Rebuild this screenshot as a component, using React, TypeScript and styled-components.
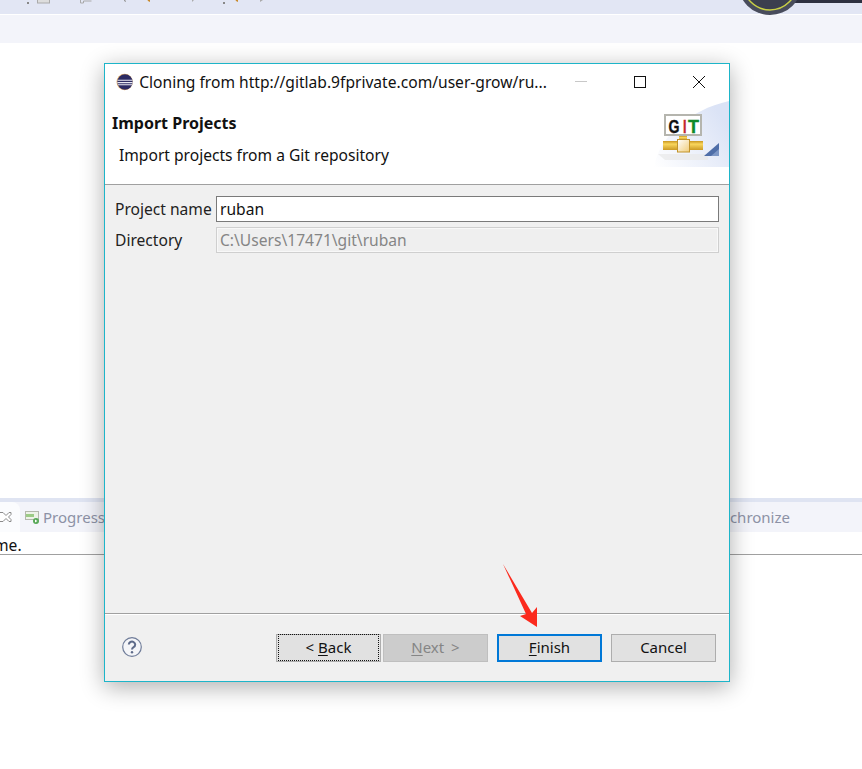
import styled, { createGlobalStyle } from "styled-components";

const GlobalStyle = createGlobalStyle`
  html, body {
    margin: 0;
    padding: 0;
    background: #fff;
  }
  body {
    font-family: "Noto Sans", "Open Sans", "Liberation Sans", sans-serif;
    font-size: 15.6px;
    color: #111;
  }
`;

const Page = styled.div`
  position: relative;
  width: 862px;
  height: 769px;
  overflow: hidden;
  display: flex;
  flex-direction: column;
`;

const TopToolbar = styled.div`
  position: relative;
  height: 14px;
  background: #e2e6f4;
  border-bottom: 1px solid #fff;
`;

const TopStrip = styled.div`
  height: 28px;
  background: #f3f4fa;
`;

const Editor = styled.div`
  height: 455px;
`;

const ViewStack = styled.div`
  border-top: 4px solid #dfe4f2;
`;

const TabBar = styled.div`
  height: 30px;
  background: #f3f4fa;
  display: flex;
  justify-content: space-between;
  align-items: center;
  padding-right: 72px;
  color: #8d92a6;
  font-size: 15px;
`;

const TabGroup = styled.div`
  height: 100%;
  display: flex;
  align-items: center;
`;

const ActiveTab = styled.div`
  width: 20px;
  height: 100%;
  background: #fbfcfe;
  border-top-right-radius: 8px;
  display: flex;
  align-items: center;
`;

const Tab = styled.div`
  display: flex;
  align-items: center;
  gap: 4px;
  margin-left: 5px;
`;

const Console = styled.div`
  height: 22px;
  line-height: 26px;
  border-bottom: 1px solid #a0a0a0;
  color: #111;
  margin-left: -6px;
`;

const Dialog = styled.div`
  position: absolute;
  left: 104px;
  top: 63px;
  width: 626px;
  height: 619px;
  box-sizing: border-box;
  border: 1px solid #1db5c9;
  background: #f0f0f0;
  box-shadow: 0 5px 22px rgba(0, 0, 0, 0.32);
  display: flex;
  flex-direction: column;
`;

const TitleBar = styled.div`
  height: 37px;
  flex: none;
  background: #fff;
  display: flex;
  align-items: center;
  padding: 0 1px 1px 11px;
  box-sizing: border-box;
`;

const Title = styled.div`
  margin-left: 6px;
  width: 430px;
  white-space: nowrap;
`;

const WindowButtons = styled.div`
  margin-left: auto;
  display: flex;
  align-items: center;
`;

const WindowButton = styled.div`
  width: 59px;
  height: 36px;
  display: flex;
  align-items: center;
  justify-content: center;
`;

const Header = styled.div`
  position: relative;
  height: 84px;
  flex: none;
  box-sizing: border-box;
  background: #fff;
  border-bottom: 1px solid #a0a0a0;
  padding: 9px 0 0 7px;
`;

const HeaderTitle = styled.div`
  font-weight: 700;
  font-size: 16px;
  line-height: 26px;
`;

const HeaderMessage = styled.div`
  margin: 6px 0 0 7px;
  line-height: 26px;
`;

const Banner = styled.svg`
  position: absolute;
  right: 0;
  top: 0;
`;

const Form = styled.div`
  flex: 1;
  padding: 11px 10px 0;
  display: grid;
  grid-template-columns: 101px 1fr;
  grid-auto-rows: 26px;
  row-gap: 5px;
  align-items: center;
`;

const FieldLabel = styled.label`
  color: #222;
`;

const TextInput = styled.div<{ $disabled?: boolean }>`
  height: 26px;
  box-sizing: border-box;
  padding-left: 3px;
  line-height: 24px;
  border: 1px solid ${(p) => (p.$disabled ? "#cfcfcf" : "#7a7a7a")};
  background: ${(p) => (p.$disabled ? "#efefef" : "#fff")};
  color: ${(p) => (p.$disabled ? "#858585" : "#111")};
  box-shadow: ${(p) => (p.$disabled ? "inset 0 0 0 1px #f8f8f8" : "none")};
`;

const Footer = styled.div`
  height: 68px;
  flex: none;
  box-sizing: border-box;
  border-top: 1px solid #a0a0a0;
  box-shadow: inset 0 1px 0 #fff;
  padding: 20px 13px 0 17px;
  display: flex;
  align-items: flex-start;
`;

const HelpButton = styled.div`
  margin-top: 3px;
  line-height: 0;
`;

const Buttons = styled.div`
  margin-left: auto;
  display: flex;
  font-size: 15px;
`;

const Button = styled.div<{ $kind?: "focus" | "disabled" | "default" }>`
  width: 105px;
  height: 28px;
  box-sizing: border-box;
  margin-left: ${(p) => (p.$kind === "default" ? "7px" : "0")};
  margin-right: ${(p) => (p.$kind === "default" ? "9px" : "2px")};
  display: flex;
  align-items: center;
  justify-content: center;
  line-height: 1;
  padding-bottom: 1px;
  word-spacing: ${(p) => (p.$kind === "disabled" ? "3px" : "0")};
  background: ${(p) => (p.$kind === "disabled" ? "#cccccc" : "#e1e1e1")};
  color: ${(p) => (p.$kind === "disabled" ? "#858585" : "#111")};
  border: ${(p) =>
    p.$kind === "default"
      ? "2px solid #0078d7"
      : p.$kind === "disabled"
        ? "1px solid #bfbfbf"
        : "1px solid #adadad"};
  &:last-child {
    margin-right: 0;
  }
`;

const FocusRing = styled.div`
  width: 100%;
  height: 100%;
  margin: 1px;
  border: 1px dotted #111;
  display: flex;
  align-items: center;
  justify-content: center;
`;

const Arrow = styled.svg`
  position: absolute;
  left: 500px;
  top: 562px;
`;

const Overlay = styled.svg`
  position: absolute;
  left: 0;
  top: 0;
`;

const Mnemonic = styled.span`
  text-decoration: underline;
  text-underline-offset: 2px;
`;

const EclipseIcon = () => (
  <svg width="18" height="18" viewBox="0 0 18 18">
    <circle cx="9" cy="9" r="8.5" fill="#e8b26a" />
    <circle cx="9.4" cy="9" r="8" fill="#2c2b63" />
    <path d="M1.6 6.6h15.6v1.1H1.6zM1.4 9h16v1.2H1.4zM2 11.4h14.8v1H2z" fill="#e9e9f2" />
  </svg>
);

const GitBanner = () => (
  <Banner width="76" height="68" viewBox="0 0 76 68">
    <defs>
      <linearGradient id="glow" x1="0" y1="1" x2="1" y2="0.4">
        <stop offset="0" stopColor="#ffffff" />
        <stop offset="1" stopColor="#dbe3f6" />
      </linearGradient>
      <linearGradient id="pipe" x1="0" y1="0" x2="0" y2="1">
        <stop offset="0" stopColor="#c9961f" />
        <stop offset="0.35" stopColor="#f9d65c" />
        <stop offset="1" stopColor="#cc9a24" />
      </linearGradient>
      <linearGradient id="joint" x1="0" y1="0" x2="1" y2="1">
        <stop offset="0" stopColor="#ffffff" />
        <stop offset="1" stopColor="#f0cd7a" />
      </linearGradient>
    </defs>
    <path d="M1 66C6 36 36 9 76 0V66Z" fill="url(#glow)" />
    <path d="M5 53h50v6H12z" fill="#e8e8e8" opacity="0.7" />
    <rect x="12" y="14" width="36" height="20" fill="#fff" stroke="#b5b5ae" strokeWidth="2" />
    <text x="15.500" y="32" fontFamily="Liberation Sans" fontWeight="700" fontSize="19" fill="#111" stroke="#111" strokeWidth="0.400" textLength="11" lengthAdjust="spacingAndGlyphs">G</text>
    <text x="30" y="32" fontFamily="Liberation Sans" fontWeight="700" fontSize="19" fill="#c2272d" stroke="#c2272d" strokeWidth="0.400" textLength="3.500" lengthAdjust="spacingAndGlyphs">I</text>
    <text x="35" y="32" fontFamily="Liberation Sans" fontWeight="700" fontSize="19" fill="#0f8a2b" stroke="#0f8a2b" strokeWidth="0.400" textLength="11" lengthAdjust="spacingAndGlyphs">T</text>
    <rect x="26" y="35" width="8" height="4" fill="url(#pipe)" />
    <rect x="10" y="40" width="40" height="9" fill="url(#pipe)" />
    <rect x="24.500" y="38.500" width="12" height="12.500" fill="url(#joint)" stroke="#c2942b" />
    <path d="M51 55L66 42V55Z" fill="#4f6ea8" />
    <path d="M58 55L66 48V55Z" fill="#7d97c6" />
  </Banner>
);

const ChromeBits = () => (
  <Overlay width="862" height="16" viewBox="0 0 862 16">
    <rect x="27" y="2" width="2" height="2" fill="#888" />
    <rect x="37.500" y="-1" width="12" height="4" fill="#ddd" stroke="#aaa" />
    <path d="M80.500 -1v4h3v-2h8" fill="none" stroke="#aaa" />
    <path d="M124 -1l2 2v1l-2-1z" fill="#999" />
    <path d="M147 -1l1 2 2 1V-1z" fill="#c98a2c" />
    <path d="M192 -1l2 1-2 2z" fill="#aaa" />
    <rect x="223" y="2" width="2" height="2" fill="#888" />
    <path d="M235 -1l1 2 2 1V-1z" fill="#c98a2c" />
    <path d="M260 -1l3 1-3 2z" fill="#aaa" />
    <rect x="790" y="-2" width="72" height="5" fill="#2d3040" />
    <circle cx="770" cy="-17" r="32" fill="#484c5c" />
    <circle cx="770" cy="-17" r="27" fill="#3b3f4e" stroke="#c8cf45" strokeWidth="1.5" />
  </Overlay>
);

export default function App() {
  return (
    <Page>
      <GlobalStyle />
      <TopToolbar />
      <TopStrip />
      <Editor />
      <ViewStack>
        <TabBar>
          <TabGroup>
            <ActiveTab>
              <svg width="12" height="12" viewBox="0 0 12 12">
                <path d="M0 1.500h3l3 3 3-3h2v2L8.500 6 11 8.500v2H9l-3-3-3 3H0" fill="#fff" stroke="#8b8b8b" />
              </svg>
            </ActiveTab>
            <Tab>
              <svg width="14" height="14" viewBox="0 0 14 14">
                <rect x="0.500" y="1.500" width="13" height="8" fill="#eef3e8" stroke="#b4b8ad" />
                <rect x="1" y="4" width="8" height="3" fill="#9ccb86" />
                <circle cx="11" cy="11" r="3" fill="#57a857" />
                <path d="M10 9.500l2.500 1.500-2.500 1.500z" fill="#fff" />
              </svg>
              Progress
            </Tab>
          </TabGroup>
          <span>Synchronize</span>
        </TabBar>
        <Console>me.</Console>
      </ViewStack>
      <ChromeBits />

      <Dialog>
        <TitleBar>
          <EclipseIcon />
          <Title>Cloning from http://gitlab.9fprivate.com/user-grow/ru...</Title>
          <WindowButtons>
            <WindowButton>
              <svg width="12" height="12" viewBox="0 0 12 12">
                <path d="M0 5.500h12" stroke="#c8c8c8" />
              </svg>
            </WindowButton>
            <WindowButton>
              <svg width="12" height="12" viewBox="0 0 12 12">
                <rect x="0.500" y="0.500" width="11" height="11" fill="none" stroke="#111" />
              </svg>
            </WindowButton>
            <WindowButton>
              <svg width="12" height="12" viewBox="0 0 12 12">
                <path d="M0 0l12 12M12 0L0 12" stroke="#111" />
              </svg>
            </WindowButton>
          </WindowButtons>
        </TitleBar>
        <Header>
          <HeaderTitle>Import Projects</HeaderTitle>
          <HeaderMessage>Import projects from a Git repository</HeaderMessage>
          <GitBanner />
        </Header>
        <Form>
          <FieldLabel>Project name</FieldLabel>
          <TextInput>ruban</TextInput>
          <FieldLabel>Directory</FieldLabel>
          <TextInput $disabled>C:\Users\17471\git\ruban</TextInput>
        </Form>
        <Footer>
          <HelpButton>
            <svg width="20" height="20" viewBox="0 0 20 20">
              <circle cx="10" cy="10" r="9.300" fill="#f4f5f8" stroke="#6f7c99" strokeWidth="1.200" />
              <path d="M6.800 7.600a3.200 3 0 1 1 4.800 2.600c-1 .6-1.600 1.100-1.600 2.300" fill="none" stroke="#5e6b8a" strokeWidth="2" />
              <circle cx="10" cy="15.300" r="1.200" fill="#5e6b8a" />
            </svg>
          </HelpButton>
          <Buttons>
            <Button $kind="focus">
              <FocusRing>
                &lt;&nbsp;<Mnemonic>B</Mnemonic>ack
              </FocusRing>
            </Button>
            <Button $kind="disabled">
              <Mnemonic>N</Mnemonic>ext &gt;
            </Button>
            <Button $kind="default">
              <Mnemonic>F</Mnemonic>inish
            </Button>
            <Button>Cancel</Button>
          </Buttons>
        </Footer>
      </Dialog>

      <Arrow width="40" height="68" viewBox="0 0 40 68">
        <path d="M3 2L32 51 37 45V65L20 54 26 52Z" fill="#fb2a1d" />
      </Arrow>
    </Page>
  );
}
